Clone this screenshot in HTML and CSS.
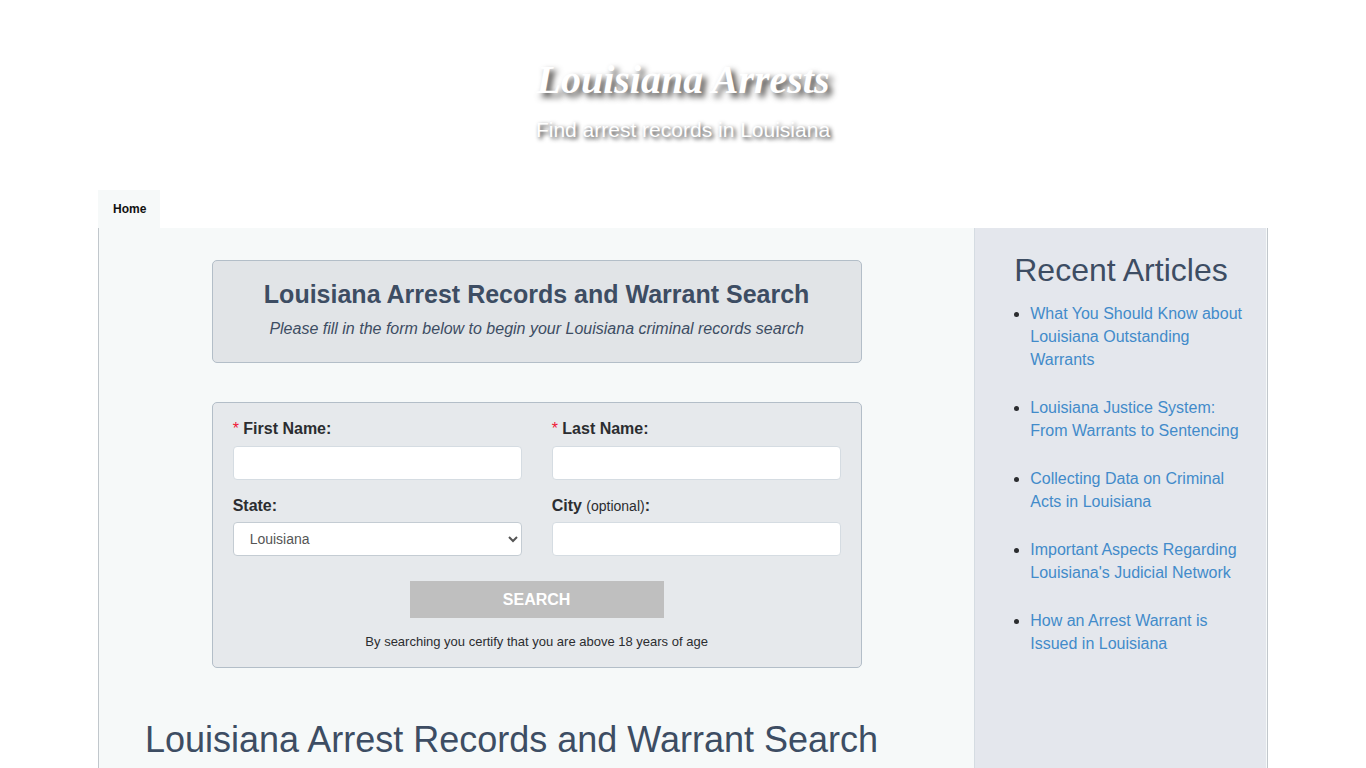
FILE: index.html
```html
<!DOCTYPE html>
<html lang="en">
<head>
<meta charset="utf-8">
<meta name="viewport" content="width=device-width, initial-scale=1">
<title>Louisiana Arrests</title>
<link rel="stylesheet" href="styles.css">
</head>
<body class="page">
<header class="masthead">
  <p class="site-title">Louisiana Arrests</p>
  <p class="site-tagline">Find arrest records in Louisiana</p>
</header>
<div class="container">
  <nav class="tabs"><a class="tab" href="#">Home</a></nav>
  <div class="columns">
    <main class="main">
      <section class="panel intro">
        <h2 class="intro-title">Louisiana Arrest Records and Warrant Search</h2>
        <p class="intro-text">Please fill in the form below to begin your Louisiana criminal records search</p>
      </section>
      <form class="panel search">
        <div class="fields">
          <div class="field">
            <label class="label" for="first"><span class="required">*</span> First Name:</label>
            <input class="control" id="first" type="text" required>
          </div>
          <div class="field">
            <label class="label" for="last"><span class="required">*</span> Last Name:</label>
            <input class="control" id="last" type="text" required>
          </div>
          <div class="field">
            <label class="label" for="state">State:</label>
            <select class="control" id="state"><option>Louisiana</option></select>
          </div>
          <div class="field">
            <label class="label" for="city">City <span class="optional">(optional)</span>:</label>
            <input class="control" id="city" type="text">
          </div>
        </div>
        <button class="submit" type="submit">SEARCH</button>
        <p class="notice">By searching you certify that you are above 18 years of age</p>
      </form>
      <h1 class="heading">Louisiana Arrest Records and Warrant Search</h1>
    </main>
    <aside class="sidebar">
      <h2 class="sidebar-title">Recent Articles</h2>
      <ul class="articles">
        <li class="article"><a class="link" href="#">What You Should Know about Louisiana Outstanding Warrants</a></li>
        <li class="article"><a class="link" href="#">Louisiana Justice System: From Warrants to Sentencing</a></li>
        <li class="article"><a class="link" href="#">Collecting Data on Criminal Acts in Louisiana</a></li>
        <li class="article"><a class="link" href="#">Important Aspects Regarding Louisiana's Judicial Network</a></li>
        <li class="article"><a class="link" href="#">How an Arrest Warrant is Issued in Louisiana</a></li>
      </ul>
    </aside>
  </div>
</div>
</body>
</html>
```
FILE: styles.css
```css
* { box-sizing: border-box; }

.page {
  margin: 0;
  min-height: 100vh;
  display: flex;
  flex-direction: column;
  background: #fff;
  color: #2b2d30;
  font: 16px/23px "Liberation Sans", Arial, sans-serif;
}

.masthead {
  padding: 56px 16px 47px;
  color: #fff;
  text-align: center;
}
.site-title {
  margin: 0 0 13px;
  font: italic bold 40px/48px "Liberation Serif", "Times New Roman", serif;
  text-shadow: 4px 4px 6px #3a3836;
}
.site-tagline {
  margin: 0;
  font-size: 21px;
  line-height: 26px;
  text-shadow: 2px 2px 4px #222;
}

.container {
  width: 100%;
  max-width: 1170px;
  margin: 0 auto;
  flex: 1;
  display: flex;
  flex-direction: column;
}
.tabs { display: flex; }
.tab {
  padding: 8px 14px 7px 15px;
  background: #f6f9f9;
  color: #111;
  font-size: 12px;
  font-weight: bold;
  text-decoration: none;
}
.columns {
  flex: 1;
  display: grid;
  grid-template-columns: 3fr 1fr;
  padding-right: 1px;
  border: solid #c1c7cc;
  border-width: 0 1px;
  background: #f6f9f9;
}

.main { padding: 32px 46px 8px; }
.panel {
  max-width: 650px;
  margin: 0 auto;
  border: 1px solid #b3bec8;
  border-radius: 5px;
}
.intro {
  margin-bottom: 39px;
  padding: 16px 20px 22px;
  background: #e1e4e7;
  color: #3d4d63;
  text-align: center;
}
.intro-title {
  margin: 0 0 6px;
  font-size: 25px;
  line-height: 34px;
}
.intro-text {
  margin: 0;
  font-style: italic;
}

.search {
  padding: 14px 20px 14px;
  background: #e6e9ec;
}
.fields {
  display: grid;
  grid-template-columns: 1fr 1fr;
  gap: 14px 30px;
}
.label {
  display: block;
  margin-bottom: 6px;
  font-weight: bold;
}
.fields .field:nth-child(n+3) .label { margin-bottom: 5px; }
.required {
  color: #f01535;
  font-weight: normal;
}
.optional {
  font-size: 14px;
  font-weight: normal;
  line-height: 14px;
}
.control {
  display: block;
  width: 100%;
  height: 34px;
  padding: 6px 12px;
  border: 1px solid #d5dce2;
  border-radius: 4px;
  background: #fff;
  color: #555;
  font: 14px/20px "Liberation Sans", Arial, sans-serif;
}
select.control { border-color: #c4ccd3; }
.submit {
  display: block;
  width: 254px;
  margin: 25px auto 12px;
  padding: 7px;
  border: 0;
  background: #bfbfbf;
  color: #fff;
  font: bold 16px/23px "Liberation Sans", Arial, sans-serif;
}
.notice {
  margin: 0;
  font-size: 13px;
  text-align: center;
}
.heading {
  margin: 52px 0 0;
  color: #3d4d63;
  font-size: 36px;
  font-weight: normal;
  line-height: 40px;
}

.sidebar {
  padding: 24px 20px 24px 39px;
  border-left: 1px solid #d5dce2;
  background: #e4e7ed;
}
.sidebar-title {
  margin: 0 0 14px;
  color: #3d4d63;
  font-size: 32px;
  font-weight: normal;
  line-height: 36px;
}
.articles {
  margin: 0;
  padding-left: 16px;
}
.article { margin-bottom: 25px; }
.link {
  color: #428bca;
  text-decoration: none;
}
```
